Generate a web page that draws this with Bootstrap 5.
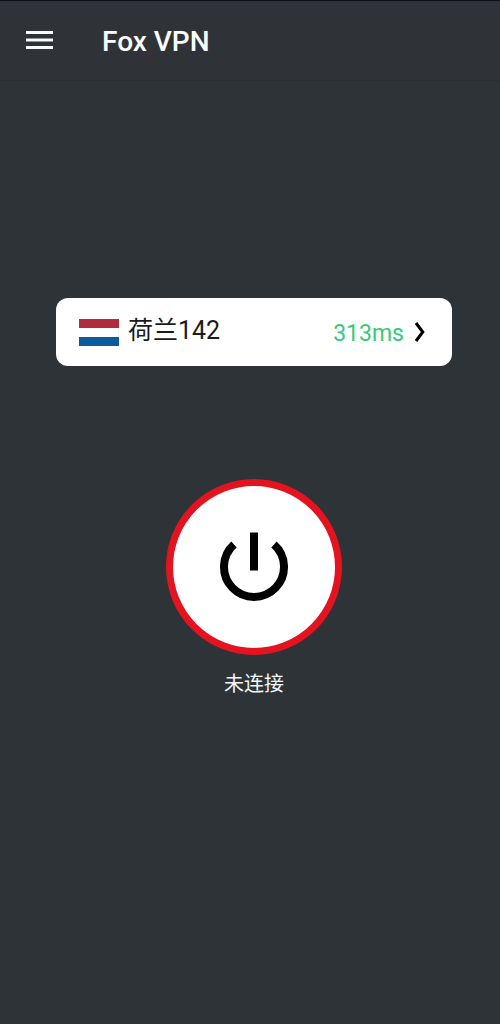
<!DOCTYPE html>
<html lang="zh-CN">
<head>
<meta charset="utf-8">
<meta name="viewport" content="width=device-width, initial-scale=1">
<title>Fox VPN</title>
<link href="https://cdn.jsdelivr.net/npm/bootstrap@5.3.0/dist/css/bootstrap.min.css" rel="stylesheet">
<style>
  body { background: #2e3337; font-family: Roboto, "Noto Sans CJK SC", sans-serif; }
  .app-bar { height: 81px; padding: 0 26px; gap: 49px; border-top: 1px solid #090c14; border-bottom: 1px solid #2a2f33; background: #2f3337; }
  .app-title { font-size: 28px; line-height: 32px; font-weight: 500; padding-top: 2px; color: #fafcfd; }
  .app-main { padding: 217px 48px 0 56px; }
  .server { height: 68px; padding: 0 26px 0 23px; border-radius: 12px; background: #fff; color: #1b1b1b; }
  .server:hover { background: #fff; }
  .server-name { font-size: 25px; line-height: 32px; margin: 0 0 2px 9px; }
  .server-ping { font-size: 23px; line-height: 32px; padding-top: 3px; color: #3cc878; margin-right: 10px; }
  .power { width: 176px; height: 176px; margin-top: 113px; border: 7px solid #e31420; background: #fff; }
  .power:hover { background: #fff; border-color: #e31420; }
  .status-text { font-size: 20px; line-height: 28px; margin-top: 15px; color: #f4f6f7; }
</style>
</head>
<body>
<header class="app-bar d-flex align-items-center">
  <button type="button" class="btn p-0 border-0 d-flex" aria-label="菜单">
    <svg width="27" height="20" viewBox="0 0 27 20" fill="#f5fafc"><path d="M0 0h27v3H0zM0 7.500h27v3H0zM0 15h27v3H0z"/></svg>
  </button>
  <h1 class="app-title m-0">Fox VPN</h1>
</header>
<main class="app-main d-flex flex-column align-items-center">
  <button type="button" class="server btn border-0 w-100 d-flex align-items-center">
    <svg width="40" height="28" viewBox="0 0 40 28" aria-hidden="true"><path fill="#ae2c3c" d="M0 1h40v9H0z"/><path fill="#f4f4f6" d="M39 10h1v9h-1z"/><path fill="#0b5c9e" d="M0 19h40v9H0z"/></svg>
    <span class="server-name">荷兰142</span>
    <span class="server-ping ms-auto">313ms</span>
    <svg width="12" height="20" viewBox="0 0 12 20" fill="none" stroke="#000" stroke-width="3" aria-hidden="true"><path d="M2 1l6.800 9L2 19"/></svg>
  </button>
  <button type="button" class="power btn rounded-circle p-0 d-flex align-items-center justify-content-center" aria-label="连接">
    <svg width="70" height="70" viewBox="-35 -35 70 70" fill="none" stroke="#000" stroke-width="8"><path d="M-20-22.400A30 30 0 1 0 20-22.400M0-34.500V3.500"/></svg>
  </button>
  <p class="status-text mb-0">未连接</p>
</main>
<script src="https://cdn.jsdelivr.net/npm/bootstrap@5.3.0/dist/js/bootstrap.bundle.min.js"></script>
</body>
</html>
